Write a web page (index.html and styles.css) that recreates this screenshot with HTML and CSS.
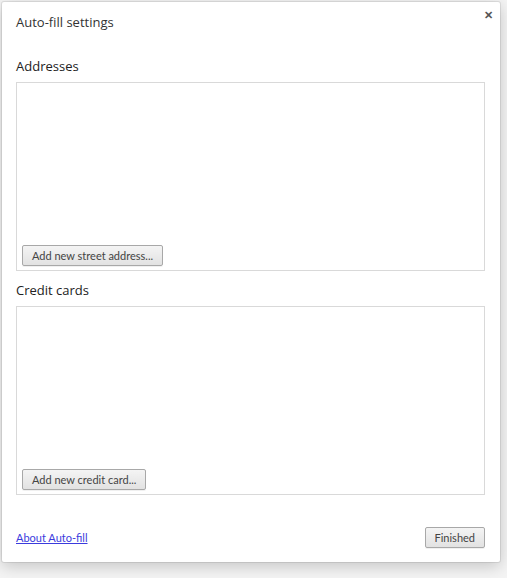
FILE: index.html
```html
<!DOCTYPE html>
<html lang="en">
<head>
    <meta charset="UTF-8">
    <meta name="viewport" content="width=device-width, initial-scale=1.0">
    <title>Auto-fill settings</title>
    <link rel="stylesheet" href="styles.css">
</head>
<body>
    <div class="overlay">
        <div class="dialog">
            <div class="dialog-head">
                <h1>Auto-fill settings</h1>
                <button class="close" aria-label="Close">&#x2715;</button>
            </div>
            <div class="section">
                <h2>Addresses</h2>
                <div class="list-box">
                    <button class="btn">Add new street address...</button>
                </div>
            </div>
            <div class="section">
                <h2>Credit cards</h2>
                <div class="list-box">
                    <button class="btn">Add new credit card...</button>
                </div>
            </div>
            <div class="dialog-foot">
                <a href="#" class="link">About Auto-fill</a>
                <button class="btn">Finished</button>
            </div>
        </div>
    </div>
</body>
</html>
```
FILE: styles.css
```css
body {
    margin: 0;
    background: #f4f4f4;
    font-family: "Open Sans", "Noto Sans", Arial, sans-serif;
    color: #333;
}

.overlay {
    padding: 2px 7px 16px 2px;
}

.dialog {
    width: 498px;
    height: 560px;
    box-sizing: border-box;
    background: #fff;
    border-radius: 2px;
    box-shadow: 0 4px 16px rgba(0, 0, 0, 0.2), 0 0 0 1px rgba(0, 0, 0, 0.08);
    padding: 11px 15px 0 14px;
    display: flex;
    flex-direction: column;
}

.dialog-head {
    display: flex;
    justify-content: space-between;
    align-items: flex-start;
    height: 40px;
}

h1 {
    margin: 0;
    font-size: 13px;
    font-weight: normal;
    color: #333;
    line-height: 18px;
}

.close {
    border: none;
    background: none;
    padding: 0;
    margin: -4px -8px 0 0;
    font-size: 11px;
    font-weight: bold;
    color: #555;
    cursor: pointer;
}

.section {
    display: flex;
    flex-direction: column;
}

.section + .section {
    margin-top: 6px;
}

h2 {
    margin: 4px 0 7px;
    font-size: 13px;
    font-weight: normal;
    color: #222;
    line-height: 18px;
}

.list-box {
    height: 189px;
    box-sizing: border-box;
    border: 1px solid #d9d9d9;
    display: flex;
    align-items: flex-end;
    padding: 0 5px 4px;
}

.btn {
    font-family: Lato, "Open Sans", Arial, sans-serif;
    font-size: 11px;
    color: #444;
    height: 21px;
    padding: 0 9px;
    border: 1px solid #a8a8a8;
    border-radius: 2px;
    background: linear-gradient(#f4f4f4, #e2e2e2);
    box-shadow: 0 1px 0 rgba(0, 0, 0, 0.06);
    cursor: pointer;
}

.dialog-foot {
    display: flex;
    justify-content: space-between;
    align-items: center;
    margin-top: 32px;
}

.link {
    font-family: Lato, "Open Sans", Arial, sans-serif;
    font-size: 11px;
    color: #3b3bdd;
    text-decoration: underline;
}
```
